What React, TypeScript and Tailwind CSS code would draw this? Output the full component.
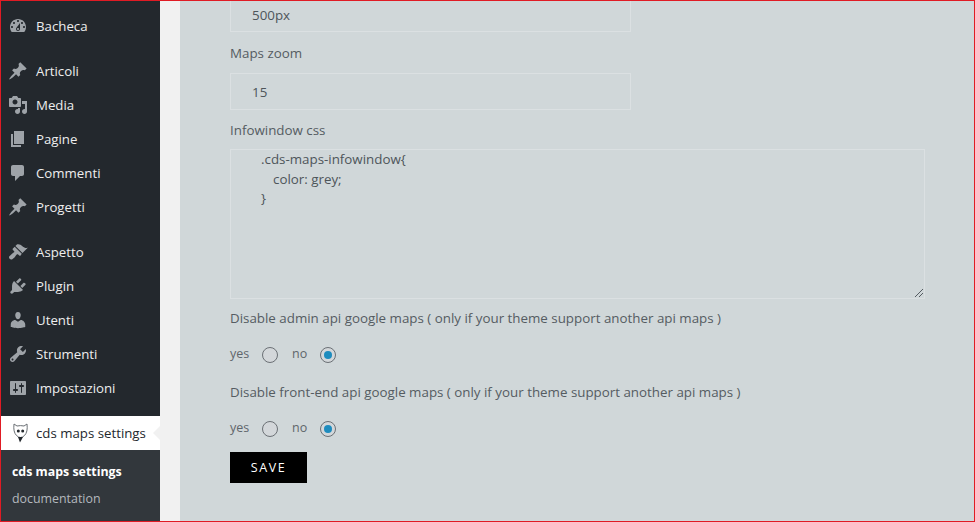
const P: Record<string, string> = {
  dash: "M3.76 16h12.48c1.1-1.37 1.76-3.11 1.76-5 0-4.42-3.58-8-8-8s-8 3.58-8 8c0 1.89.66 3.63 1.76 5zM10 4c.55 0 1 .45 1 1s-.45 1-1 1-1-.45-1-1 .45-1 1-1zM6 6c.55 0 1 .45 1 1s-.45 1-1 1-1-.45-1-1 .45-1 1-1zm8 0c.55 0 1 .45 1 1s-.45 1-1 1-1-.45-1-1 .45-1 1-1zm-5.37 5.55L12 7v6c0 1.1-.9 2-2 2s-2-.9-2-2c0-.57.24-1.08.63-1.45zM4 10c.55 0 1 .45 1 1s-.45 1-1 1-1-.45-1-1 .45-1 1-1zm12 0c.55 0 1 .45 1 1s-.45 1-1 1-1-.45-1-1 .45-1 1-1zm-5 3c0-.55-.45-1-1-1s-1 .45-1 1 .45 1 1 1 1-.45 1-1z",
  pin: "M10.44 3.02l1.82-1.82 6.36 6.35-1.83 1.82c-1.05-.68-2.48-.57-3.41.36l-.75.75c-.92.93-1.04 2.35-.35 3.41l-1.83 1.82-2.41-2.41-2.8 2.79c-.42.42-3.38 2.71-3.8 2.29s1.86-3.39 2.28-3.81l2.79-2.79L4.1 9.36l1.83-1.82c1.05.69 2.48.57 3.4-.36l.75-.75c.93-.92 1.05-2.35.36-3.41z",
  media: "M13 11V4c0-.55-.45-1-1-1h-1.67L9 1H5L3.67 3H2c-.55 0-1 .45-1 1v7c0 .55.45 1 1 1h10c.55 0 1-.45 1-1zM7 4.5c1.38 0 2.5 1.12 2.5 2.5S8.38 9.5 7 9.5 4.5 8.38 4.5 7 5.62 4.5 7 4.5zM14 6h5v10.5c0 1.38-1.12 2.5-2.5 2.5S14 17.88 14 16.5s1.12-2.5 2.5-2.5c.17 0 .34.02.5.05V9h-3V6zm-4 8.05V13h2v3.5c0 1.38-1.12 2.5-2.5 2.5S7 17.88 7 16.5 8.12 14 9.5 14c.17 0 .34.02.5.05z",
  page: "M6 15V2h10v13H6zm-1 1h8v2H3V5h2v11z",
  comment: "M5 2h9c1.1 0 2 .9 2 2v7c0 1.1-.9 2-2 2h-2l-5 5v-5H5c-1.1 0-2-.9-2-2V4c0-1.1.9-2 2-2z",
  brush: "M14.48 11.06L7.41 3.99l1.5-1.5c.5-.56 2.3-.47 3.51.32 1.21.8 1.43 1.28 2.91 2.1 1.18.64 2.45 1.26 4.45.85zm-.71.71L6.7 4.7 4.93 6.47c-.39.39-.39 1.02 0 1.41l1.06 1.06c.39.39.39 1.03 0 1.42-.6.6-1.43 1.11-2.21 1.69-.35.26-.7.53-1.01.84C1.43 13.71 1 14.65 1 15.23c0 .58.22 1.13.64 1.55s.97.64 1.55.64c.58 0 1.52-.43 3.02-1.77.31-.31.58-.66.84-1.01.58-.78 1.09-1.61 1.69-2.21.39-.39 1.03-.39 1.42 0l1.06 1.06c.39.39 1.02.39 1.41 0z",
  plug: "M13.11 4.36L9.87 7.6 8 5.73l3.24-3.24c.35-.34 1.05-.2 1.56.32.52.51.66 1.21.31 1.55zm-8 1.77l.91-1.12 9.01 9.01-1.19.84c-.71.71-2.63 1.16-3.82 1.16H6.14L4.9 17.26c-.59.59-1.54.59-2.12 0-.59-.58-.59-1.53 0-2.12l1.24-1.24v-3.88c0-1.13.4-3.19 1.09-3.89zm7.26 3.97l3.24-3.24c.34-.35 1.04-.21 1.55.31.52.51.66 1.21.31 1.55l-3.24 3.25z",
  user: "M10 9.25c-2.27 0-2.73-3.44-2.73-3.44C7 4.02 7.82 2 9.97 2c2.16 0 2.98 2.02 2.71 3.81 0 0-.41 3.44-2.68 3.44zm0 2.57L12.72 10c2.39 0 4.52 2.33 4.52 4.53v2.49s-3.65 1.13-7.24 1.13c-3.65 0-7.24-1.13-7.24-1.13v-2.49c0-2.25 1.94-4.48 4.47-4.48z",
  tool: "M16.68 9.77c-1.34 1.34-3.3 1.67-4.95.99l-5.41 6.52c-.99.99-2.59.99-3.58 0s-.99-2.59 0-3.57l6.52-5.42c-.68-1.65-.35-3.61.99-4.95 1.28-1.28 3.12-1.62 4.72-1.06l-2.89 2.89 2.82 2.82 2.86-2.87c.53 1.58.18 3.39-1.08 4.65zM3.81 16.21c.4.39 1.04.39 1.43 0 .4-.4.4-1.04 0-1.43-.39-.4-1.03-.4-1.43 0-.39.39-.39 1.03 0 1.43z",
  settings: "M18 16V4c0-.55-.45-1-1-1H3c-.55 0-1 .45-1 1v12c0 .55.45 1 1 1h14c.55 0 1-.45 1-1zM8 11h1c.55 0 1 .45 1 1s-.45 1-1 1H8v1.5c0 .28-.22.5-.5.5s-.5-.22-.5-.5V13H6c-.55 0-1-.45-1-1s.45-1 1-1h1V5.5c0-.28.22-.5.5-.5s.5.22.5.5V11zm5-2h-1c-.55 0-1-.45-1-1s.45-1 1-1h1V5.5c0-.28.22-.5.5-.5s.5.22.5.5V7h1c.55 0 1 .45 1 1s-.45 1-1 1h-1v5.5c0 .28-.22.5-.5.5s-.5-.22-.5-.5V9z",
};

function Item({ icon, label }: { icon: string; label: string }) {
  return (
    <div className="flex h-[34px] items-center text-[13.25px] text-[#eeeeee]">
      <svg viewBox="0 0 20 20" className="ml-[7px] h-[20px] w-[20px] shrink-0 fill-[#9ea3a8]">
        <path d={P[icon]} />
      </svg>
      <span className="relative top-[1px] ml-[8px]">{label}</span>
    </div>
  );
}

function Radios() {
  return (
    <div className="flex h-[20px] items-center text-[12.5px] text-[#5f666b]">
      <span className="relative top-[-1px] w-[18px]">yes</span>
      <span className="ml-[14px] h-[16px] w-[16px] rounded-full border border-[#6b7075] bg-[#d3d7da]" />
      <span className="relative top-[-1px] ml-[14px] w-[14px]">no</span>
      <span className="ml-[14px] flex h-[16px] w-[16px] items-center justify-center rounded-full border border-[#6b7075] bg-[#d3d7da]">
        <span className="h-[8px] w-[8px] rounded-full bg-[#1e8cbe]" />
      </span>
    </div>
  );
}

function Input({ value, className }: { value: string; className: string }) {
  return (
    <div className={`ml-[50px] flex w-[401px] items-center border border-[#dbe0e2] pl-[21px] text-[13.35px] text-[#4e555a] ${className}`}>
      {value}
    </div>
  );
}

export default function App() {
  return (
    <div className="flex h-[522px] w-[975px] overflow-hidden border border-[#e01b24] font-['Open_Sans',sans-serif]">
      <aside className="flex w-[159px] shrink-0 flex-col bg-[#23282d]">
        <div className="pt-[8px]">
          <Item icon="dash" label="Bacheca" />
        </div>
        <div className="mt-[11px]">
          <Item icon="pin" label="Articoli" />
          <Item icon="media" label="Media" />
          <Item icon="page" label="Pagine" />
          <Item icon="comment" label="Commenti" />
          <Item icon="pin" label="Progetti" />
        </div>
        <div className="mt-[11px]">
          <Item icon="brush" label="Aspetto" />
          <Item icon="plug" label="Plugin" />
          <Item icon="user" label="Utenti" />
          <Item icon="tool" label="Strumenti" />
          <Item icon="settings" label="Impostazioni" />
        </div>
        <div className="relative mt-[11px] flex h-[34px] items-center bg-white text-[13.25px] text-[#23282d]">
          <svg viewBox="0 0 15 20" className="ml-[12px] h-[20px] w-[15px] shrink-0">
            <path d="M1 1 L4 3 Q7.5 2.2 11 3 L14 1 Q15 9 11.5 12.5 Q9.5 14.5 7.5 14.5 Q5.5 14.5 3.5 12.5 Q0 9 1 1 Z" fill="#fff" stroke="#6b7075" strokeWidth="1" />
            <circle cx="5.3" cy="8" r="1.5" fill="#23282d" />
            <circle cx="9.7" cy="8" r="1.5" fill="#23282d" />
            <path d="M5 14 L10 14 L7 19.5 Z" fill="#23282d" />
          </svg>
          <span className="relative top-[1px] ml-[8px]">cds maps settings</span>
          <span className="absolute right-0 top-[10px] h-0 w-0 border-y-[7px] border-r-[7px] border-y-transparent border-r-[#f1f1f1]" />
        </div>
        <div className="flex-1 bg-[#32373c] pl-[11px] pt-[12px] text-[12.4px]">
          <div className="h-[27px] font-bold leading-[20px] text-white">cds maps settings</div>
          <div className="leading-[20px] text-[#b4b9be]">documentation</div>
        </div>
      </aside>
      <div className="w-[20px] shrink-0 bg-[#f1f1f1]" />
      <main className="flex min-w-0 flex-1 flex-col bg-[#d0d7d9] pb-[38px]">
        <Input value="500px" className="h-[31px] border-t-0 pb-[1px]" />
        <label className="ml-[50px] mt-[11px] h-[21px] text-[13.35px] leading-[21px] text-[#555c62]">Maps zoom</label>
        <Input value="15" className="mt-[9px] h-[37px] pt-[1px]" />
        <label className="ml-[50px] mt-[10px] h-[21px] text-[13.35px] leading-[21px] text-[#555c62]">Infowindow css</label>
        <div className="relative ml-[50px] mt-[8px] h-[150px] w-[695px] border border-[#dbe0e2] text-[13.35px] leading-[19.5px] text-[#4e555a]">
          <div className="pl-[30px]">.cds-maps-infowindow{"{"}</div>
          <div className="pl-[42px]">color: grey;</div>
          <div className="pl-[30px]">{"}"}</div>
          <svg viewBox="0 0 10 10" className="absolute bottom-0 right-0 h-[10px] w-[10px] stroke-[#555c62]">
            <path d="M1 9 L9 1 M5 9 L9 5" strokeWidth="1" />
          </svg>
        </div>
        <p className="ml-[50px] mt-[9px] h-[21px] text-[13.35px] leading-[21px] text-[#555c62]">Disable admin api google maps ( only if your theme support another api maps )</p>
        <div className="ml-[50px] mt-[16px]"><Radios /></div>
        <p className="ml-[50px] mt-[17px] h-[21px] text-[13.35px] leading-[21px] text-[#555c62]">Disable front-end api google maps ( only if your theme support another api maps )</p>
        <div className="ml-[50px] mt-[16px]"><Radios /></div>
        <button className="ml-[50px] mt-[13px] flex h-[31px] w-[77px] items-center justify-center bg-black pt-[2px] text-[12.5px] tracking-[1.6px] text-white">SAVE</button>
      </main>
    </div>
  );
}
